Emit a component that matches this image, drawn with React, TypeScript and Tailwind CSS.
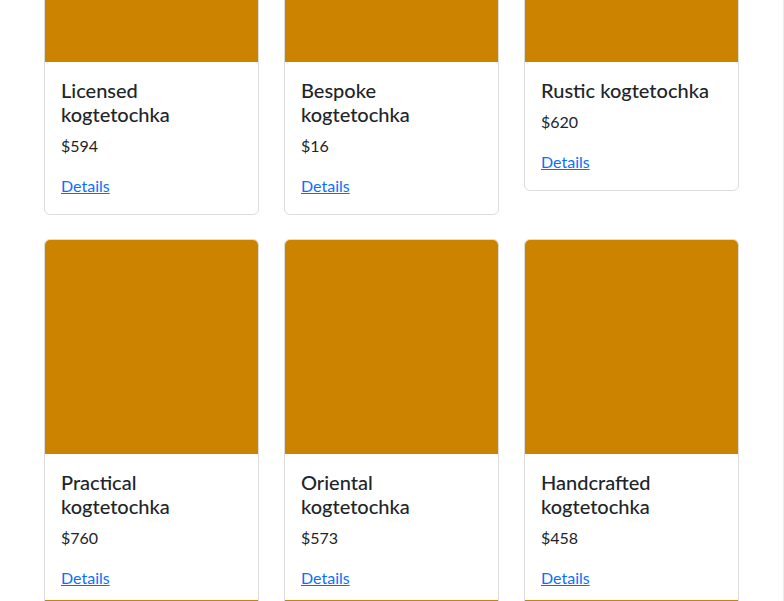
const products = [
  { name: "Licensed kogtetochka", price: 594 },
  { name: "Bespoke kogtetochka", price: 16 },
  { name: "Rustic kogtetochka", price: 620 },
  { name: "Practical kogtetochka", price: 760 },
  { name: "Oriental kogtetochka", price: 573 },
  { name: "Handcrafted kogtetochka", price: 458 },
];

const ProductCard = ({
  name,
  price,
  cutoff,
}: {
  name: string;
  price: number;
  cutoff?: boolean;
}) => {
  return (
    <div className="w-[215px] self-start overflow-hidden rounded-[6px] border border-[#dcdcdc] bg-white">
      <div className="h-[214px] bg-[#cc8400]" />
      <div className={`px-4 pt-4 ${cutoff ? "pb-[10px]" : "pb-4"}`}>
        <h5 className="mb-2 text-[20px] font-medium leading-[24px] text-[#212529]">
          {name}
        </h5>
        <p className="mb-4 text-[16px] leading-[24px] text-[#212529]">
          ${price}
        </p>
        <a
          href="#"
          className="text-[16px] leading-[24px] text-[#0d6efd] underline"
        >
          Details
        </a>
      </div>
      {cutoff && <div className="h-[6px] bg-[#cc8400]" />}
    </div>
  );
};

export default function App() {
  return (
    <div
      className="flex h-[601px] overflow-hidden bg-white"
      style={{ fontFamily: 'Lato, "Noto Sans", sans-serif' }}
    >
      <div className="flex-1">
        <div className="mt-[-153px] grid grid-cols-[215px_215px_215px] gap-x-[25px] gap-y-[24px] pl-[44px]">
          {products.map((p, i) => (
            <ProductCard key={p.name} name={p.name} price={p.price} cutoff={i >= 3} />
          ))}
        </div>
      </div>
      <div className="w-px bg-[#ececec]" />
    </div>
  );
}
